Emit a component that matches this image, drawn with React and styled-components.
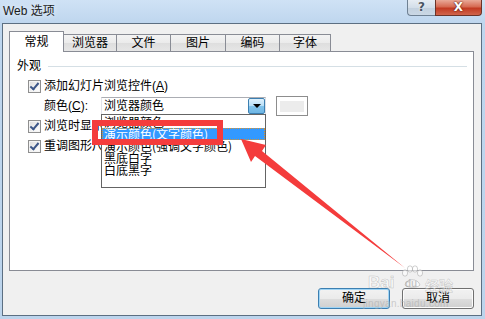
import React from "react";
import styled, { createGlobalStyle } from "styled-components";

const GlobalStyle = createGlobalStyle`
  html, body {
    margin: 0;
    padding: 0;
  }
  body {
    width: 485px;
    height: 319px;
    overflow: hidden;
    font-family: "Liberation Sans", "Noto Sans CJK SC", sans-serif;
    font-size: 12px;
    color: #000;
  }
`;

const tabs = [
  { label: "常规", width: 55, active: true },
  { label: "浏览器", width: 53 },
  { label: "文件", width: 54 },
  { label: "图片", width: 55 },
  { label: "编码", width: 54 },
  { label: "字体", width: 51 },
];

const colorOptions = [
  "浏览器颜色",
  "演示颜色(文字颜色)",
  "演示颜色(强调文字颜色)",
  "黑底白字",
  "白底黑字",
];

const App = () => {
  return (
    <>
      <GlobalStyle />
      <Window>
        <TitleBar>
          <Title>Web 选项</Title>
          <CaptionButtons>
            <HelpButton>?</HelpButton>
            <CloseButton>X</CloseButton>
          </CaptionButtons>
        </TitleBar>
        <Body>
          <TabRow>
            {tabs.map((t) => (
              <Tab key={t.label} $active={t.active} $width={t.width}>
                {t.label}
              </Tab>
            ))}
          </TabRow>
          <Panel>
            <Legend>
              <span>外观</span>
              <LegendLine />
            </Legend>
            <CheckRow $top={8}>
              <CheckBox />
              <CheckLabel>
                添加幻灯片浏览控件(<u>A</u>)
              </CheckLabel>
            </CheckRow>
            <ColorRow>
              <ColorLabel>
                颜色(<u>C</u>):
              </ColorLabel>
              <Combo>
                <ComboText>浏览器颜色</ComboText>
                <DropButton>
                  <Triangle />
                </DropButton>
                <DropList>
                  {colorOptions.map((o, i) => (
                    <ListItem key={o} $selected={i === 1}>
                      {o}
                    </ListItem>
                  ))}
                </DropList>
              </Combo>
              <Swatch>
                <SwatchFill />
              </Swatch>
            </ColorRow>
            <CheckRow $top={5}>
              <CheckBox />
              <CheckLabel>
                浏览时显示幻灯片动画(<u>S</u>)
              </CheckLabel>
            </CheckRow>
            <CheckRow $top={7}>
              <CheckBox />
              <CheckLabel>
                重调图形尺寸以适应浏览器窗口(<u>R</u>)
              </CheckLabel>
            </CheckRow>
          </Panel>
          <ButtonRow>
            <DialogButton $default>确定</DialogButton>
            <DialogButton>取消</DialogButton>
          </ButtonRow>
        </Body>

        <Watermark>
          <WmBai>Bai</WmBai>
          <Paw>
            <svg width="24" height="24" viewBox="0 0 24 24">
              <g fill="rgba(255,255,255,0.6)" stroke="rgba(150,150,150,0.45)" strokeWidth="1">
                <ellipse cx="5" cy="8" rx="2.6" ry="3.2" />
                <ellipse cx="10" cy="4" rx="2.6" ry="3.2" />
                <ellipse cx="15" cy="4" rx="2.6" ry="3.2" />
                <ellipse cx="20" cy="8" rx="2.6" ry="3.2" />
                <path d="M5 20 C6 13, 18 13, 20 20 C18 23, 7 23, 5 20 Z" />
              </g>
            </svg>
            <PawText>du</PawText>
          </Paw>
          <WmCn>经验</WmCn>
          <WmUrl>jingyan.baidu.com</WmUrl>
        </Watermark>

        <RedBox />
        <Arrow width="485" height="319" viewBox="0 0 485 319">
          <polygon
            points="241,139 266,145 262,151 405,268 255,156 251,162"
            fill="#f43c3c"
          />
        </Arrow>
      </Window>
    </>
  );
};

export default App;

const Window = styled.div`
  position: relative;
  width: 485px;
  height: 319px;
  box-sizing: border-box;
  display: flex;
  flex-direction: column;
  padding: 0 3px 3px 2px;
  background: linear-gradient(180deg, #cfe2f5 0%, #bed6ee 24px, #bcd4ec 100%);
`;

const TitleBar = styled.div`
  height: 23px;
  display: flex;
  justify-content: space-between;
  align-items: flex-start;
  flex-shrink: 0;
`;

const Title = styled.div`
  padding: 4px 0 0 1px;
  font-family: "Liberation Sans", "Noto Sans CJK SC", sans-serif;
  font-size: 12px;
  line-height: 15px;
  color: #1a1a1a;
  text-shadow: 0 0 6px rgba(255, 255, 255, 0.9);
`;

const CaptionButtons = styled.div`
  display: flex;
  height: 16px;
`;

const HelpButton = styled.div`
  width: 28px;
  height: 16px;
  box-sizing: border-box;
  border: 1px solid #6f8193;
  border-top: none;
  border-right: none;
  border-radius: 0 0 0 4px;
  background: linear-gradient(180deg, #e6ecf3 0%, #d3dee9 50%, #c2d0de 51%, #cbd8e5 100%);
  color: #4a5562;
  font: bold 12px/15px "DejaVu Sans", sans-serif;
  text-align: center;
  text-shadow: 0 0 2px #fff;
`;

const CloseButton = styled.div`
  width: 47px;
  height: 16px;
  box-sizing: border-box;
  border: 1px solid #6b3328;
  border-top: none;
  border-radius: 0 0 4px 0;
  background: linear-gradient(180deg, #e9a998 0%, #d66a52 45%, #c23a22 55%, #d0654c 100%);
  color: #fff;
  font: bold 12px/15px "DejaVu Sans", sans-serif;
  text-align: center;
  text-shadow: 0 0 2px #5a1a10, 0 0 1px #5a1a10;
`;

const Body = styled.div`
  flex: 1;
  display: flex;
  flex-direction: column;
  box-sizing: border-box;
  background: #f0f0f0;
  border: 1px solid #5c6f82;
  padding: 7px 7px 0 6px;
  font-family: "Liberation Sans", "Noto Sans CJK SC", sans-serif;
`;

const TabRow = styled.div`
  display: flex;
  align-items: flex-end;
  height: 21px;
  position: relative;
  z-index: 1;
`;

const Tab = styled.div`
  box-sizing: border-box;
  width: ${(p) => p.$width}px;
  height: ${(p) => (p.$active ? 21 : 17)}px;
  margin-bottom: ${(p) => (p.$active ? 0 : 1)}px;
  border: 1px solid #898c95;
  border-bottom: none;
  border-left: ${(p) => (p.$active ? "1px solid #898c95" : "none")};
  background: ${(p) =>
    p.$active
      ? "#fff"
      : "linear-gradient(180deg, #f3f3f3 0%, #ebebeb 50%, #dedede 51%, #e6e6e6 100%)"};
  font-size: 12px;
  line-height: ${(p) => (p.$active ? 20 : 16)}px;
  text-align: center;
  color: #000;
`;

const Panel = styled.div`
  box-sizing: border-box;
  width: 465px;
  height: 220px;
  margin-top: -1px;
  background: #fff;
  border: 1px solid #898c95;
  padding: 0 6px 0 7px;
  display: flex;
  flex-direction: column;
`;

const Legend = styled.div`
  margin-top: 8px;
  height: 12px;
  display: flex;
  align-items: center;
  gap: 7px;
  font-size: 12px;
  line-height: 12px;
`;

const LegendLine = styled.div`
  flex: 1;
  height: 1px;
  background: #d5dfe5;
`;

const CheckRow = styled.div`
  display: flex;
  align-items: center;
  height: 13px;
  margin: ${(p) => p.$top}px 0 0 11px;
  white-space: nowrap;
`;

const CheckBox = styled.div`
  position: relative;
  width: 13px;
  height: 13px;
  box-sizing: border-box;
  flex-shrink: 0;
  border: 1px solid #8f8f8f;
  background: linear-gradient(135deg, #dcdcdc 0%, #f6f6f6 70%, #ffffff 100%);
  box-shadow: inset 0 0 0 1px #f4f4f4;

  &::after {
    content: "";
    position: absolute;
    left: 3px;
    top: 0px;
    width: 3px;
    height: 7px;
    border: solid #3c5688;
    border-width: 0 2px 2px 0;
    transform: rotate(40deg);
  }
`;

const CheckLabel = styled.span`
  margin-left: 3px;
  font-size: 12px;
  line-height: 13px;
`;

const ColorRow = styled.div`
  display: flex;
  align-items: center;
  height: 18px;
  margin: 4px 0 0 27px;
`;

const ColorLabel = styled.span`
  width: 57px;
  font-size: 12px;
  line-height: 18px;
  white-space: nowrap;
`;

const Combo = styled.div`
  position: relative;
  box-sizing: border-box;
  width: 165px;
  height: 18px;
  border: 1px solid #a2a2a2;
  border-color: #abadb3 #dbdfe6 #e3e9ef #e2e3ea;
  background: #fff;
  display: flex;
  align-items: stretch;
`;

const ComboText = styled.div`
  flex: 1;
  padding-left: 2px;
  font-size: 12px;
  line-height: 16px;
`;

const DropButton = styled.div`
  width: 17px;
  box-sizing: border-box;
  border: 1px solid #3c7fb1;
  border-radius: 2px;
  background: linear-gradient(180deg, #dff1fc 0%, #b6def7 50%, #82c4ec 51%, #6fb6e4 100%);
  display: flex;
  align-items: center;
  justify-content: center;
`;

const Triangle = styled.div`
  width: 0;
  height: 0;
  border-left: 4px solid transparent;
  border-right: 4px solid transparent;
  border-top: 4px solid #000;
`;

const DropList = styled.div`
  position: absolute;
  left: -1px;
  top: 16px;
  width: 165px;
  height: 74px;
  box-sizing: border-box;
  border: 1px solid #646464;
  background: #fff;
  padding-top: 1px;
  z-index: 2;
`;

const ListItem = styled.div`
  box-sizing: border-box;
  height: 12px;
  padding-left: 2px;
  font-family: "Noto Sans CJK SC", sans-serif;
  font-size: 12px;
  line-height: 12px;
  white-space: nowrap;
  overflow: visible;
  color: ${(p) => (p.$selected ? "#fff" : "#000")};
  background: ${(p) => (p.$selected ? "#3399ff" : "transparent")};
  outline: ${(p) => (p.$selected ? "1px dotted #d8922e" : "none")};
  outline-offset: -1px;
`;

const Swatch = styled.div`
  box-sizing: border-box;
  width: 32px;
  height: 20px;
  margin-left: 10px;
  border: 1px solid #8d8d8d;
  background: #fff;
  display: flex;
  align-items: center;
  justify-content: center;
`;

const SwatchFill = styled.div`
  width: 24px;
  height: 11px;
  background: #ececec;
`;

const ButtonRow = styled.div`
  display: flex;
  justify-content: flex-end;
  gap: 12px;
  margin-top: 17px;
`;

const DialogButton = styled.div`
  box-sizing: border-box;
  width: 72px;
  height: 21px;
  border: 1px solid ${(p) => (p.$default ? "#3c7fb1" : "#707070")};
  border-radius: 3px;
  background: linear-gradient(180deg, #f2f2f2 0%, #ebebeb 50%, #dddddd 51%, #cfcfcf 100%);
  box-shadow: ${(p) =>
    p.$default ? "inset 0 0 0 1px #9fd4f5" : "inset 0 0 0 1px #fcfcfc"};
  font-size: 12px;
  line-height: 19px;
  text-align: center;
`;

const Watermark = styled.div`
  position: absolute;
  left: 362px;
  top: 263px;
  width: 100px;
  height: 46px;
  pointer-events: none;
`;

const WmBai = styled.span`
  position: absolute;
  left: 6px;
  top: 11px;
  font: bold 17px/17px "Liberation Sans", sans-serif;
  color: rgba(255, 255, 255, 0.55);
  -webkit-text-stroke: 0.6px rgba(140, 140, 140, 0.45);
`;

const Paw = styled.div`
  position: absolute;
  left: 38px;
  top: 2px;
  width: 24px;
  height: 26px;
`;

const PawText = styled.span`
  position: absolute;
  left: 5px;
  top: 14px;
  font: bold 10px/10px "Liberation Sans", sans-serif;
  color: rgba(150, 150, 150, 0.5);
`;

const WmCn = styled.span`
  position: absolute;
  left: 63px;
  top: 15px;
  font: bold 14px/14px "Noto Sans CJK SC", sans-serif;
  color: rgba(255, 255, 255, 0.55);
  -webkit-text-stroke: 0.5px rgba(140, 140, 140, 0.45);
`;

const WmUrl = styled.span`
  position: absolute;
  left: 1px;
  top: 36px;
  font: 10px/10px "Liberation Sans", sans-serif;
  letter-spacing: 0.3px;
  color: rgba(170, 170, 170, 0.55);
`;

const RedBox = styled.div`
  position: absolute;
  left: 92px;
  top: 120px;
  width: 131px;
  height: 25px;
  box-sizing: border-box;
  border: 6px solid #f43c3c;
  z-index: 3;
  pointer-events: none;
`;

const Arrow = styled.svg`
  position: absolute;
  left: 0;
  top: 0;
  z-index: 4;
  pointer-events: none;
`;
